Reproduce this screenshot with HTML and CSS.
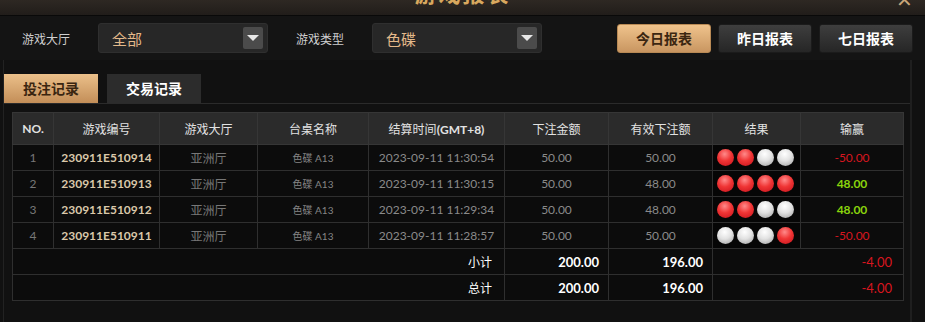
FILE: index.html
```html
<!DOCTYPE html>
<html lang="zh-CN">
<head>
<meta charset="UTF-8">
<meta name="viewport" content="width=device-width, initial-scale=1.0">
<title>游戏报表</title>
<link rel="stylesheet" href="styles.css">
</head>
<body>
  <div class="top-bar">
    <div class="title">游戏报表</div>
    <span class="close">✕</span>
  </div>

  <div class="filter-bar">
    <span class="label">游戏大厅</span>
    <div class="select">
      <span>全部</span>
      <span class="arrow"></span>
    </div>
    <span class="label">游戏类型</span>
    <div class="select">
      <span>色碟</span>
      <span class="arrow"></span>
    </div>
    <div class="btns">
      <button class="btn active">今日报表</button>
      <button class="btn">昨日报表</button>
      <button class="btn">七日报表</button>
    </div>
  </div>

  <div class="records">
    <div class="tabs">
      <div class="tab active">投注记录</div>
      <div class="tab">交易记录</div>
    </div>

    <table class="report">
      <colgroup>
        <col style="width:41px"><col style="width:106px"><col style="width:98px">
        <col style="width:111px"><col style="width:136px"><col style="width:104px">
        <col style="width:104px"><col style="width:88px"><col style="width:103px">
      </colgroup>
      <thead>
        <tr>
          <th class="en">NO.</th>
          <th>游戏编号</th>
          <th>游戏大厅</th>
          <th>台桌名称</th>
          <th>结算时间<span class="en">(GMT+8)</span></th>
          <th>下注金额</th>
          <th>有效下注额</th>
          <th>结果</th>
          <th>输赢</th>
        </tr>
      </thead>
      <tbody>
        <tr>
          <td class="no">1</td>
          <td class="id">230911E510914</td>
          <td class="hall">亚洲厅</td>
          <td class="desk">色碟 A13</td>
          <td class="num">2023-09-11 11:30:54</td>
          <td class="num">50.00</td>
          <td class="num">50.00</td>
          <td class="result"><i class="ball red"></i><i class="ball red"></i><i class="ball white"></i><i class="ball white"></i></td>
          <td class="lose">-50.00</td>
        </tr>
        <tr>
          <td class="no">2</td>
          <td class="id">230911E510913</td>
          <td class="hall">亚洲厅</td>
          <td class="desk">色碟 A13</td>
          <td class="num">2023-09-11 11:30:15</td>
          <td class="num">50.00</td>
          <td class="num">48.00</td>
          <td class="result"><i class="ball red"></i><i class="ball red"></i><i class="ball red"></i><i class="ball red"></i></td>
          <td class="win">48.00</td>
        </tr>
        <tr>
          <td class="no">3</td>
          <td class="id">230911E510912</td>
          <td class="hall">亚洲厅</td>
          <td class="desk">色碟 A13</td>
          <td class="num">2023-09-11 11:29:34</td>
          <td class="num">50.00</td>
          <td class="num">48.00</td>
          <td class="result"><i class="ball red"></i><i class="ball red"></i><i class="ball white"></i><i class="ball white"></i></td>
          <td class="win">48.00</td>
        </tr>
        <tr>
          <td class="no">4</td>
          <td class="id">230911E510911</td>
          <td class="hall">亚洲厅</td>
          <td class="desk">色碟 A13</td>
          <td class="num">2023-09-11 11:28:57</td>
          <td class="num">50.00</td>
          <td class="num">50.00</td>
          <td class="result"><i class="ball white"></i><i class="ball white"></i><i class="ball white"></i><i class="ball red"></i></td>
          <td class="lose">-50.00</td>
        </tr>
        <tr class="sum">
          <td colspan="5" class="sum-label">小计</td>
          <td class="sum-num">200.00</td>
          <td class="sum-num">196.00</td>
          <td colspan="2" class="sum-lose">-4.00</td>
        </tr>
        <tr class="sum">
          <td colspan="5" class="sum-label">总计</td>
          <td class="sum-num">200.00</td>
          <td class="sum-num">196.00</td>
          <td colspan="2" class="sum-lose">-4.00</td>
        </tr>
      </tbody>
    </table>
  </div>
</body>
</html>
```

FILE: styles.css
```css
body {
  margin: 0;
  width: 925px;
  height: 322px;
  overflow: hidden;
  background: #111111;
  color: #cccccc;
  font-family: Lato, "Noto Sans CJK SC", sans-serif;
}

/* title strip, mostly scrolled off the top */
.top-bar {
  position: relative;
  height: 15px;
  overflow: hidden;
  text-align: center;
  background: linear-gradient(#2e2823, #211d1a);
  border-bottom: 1px solid #090909;
}
.title {
  margin-top: -17px;
  font-size: 22px;
  line-height: 22px;
  font-weight: bold;
  letter-spacing: 2px;
  color: #d8a85e;
}
.close {
  position: absolute;
  right: 12px;
  top: -13px;
  font-size: 20px;
  color: #c9a77a;
}

.filter-bar {
  display: flex;
  align-items: center;
  height: 44px;
  padding: 0 12px 0 22px;
  background: #141414;
}
.label {
  width: 48px;
  margin-right: 28px;
  font-size: 12px;
  color: #cfcfcf;
}
.select {
  display: flex;
  align-items: center;
  justify-content: space-between;
  box-sizing: border-box;
  width: 170px;
  height: 30px;
  margin-right: 28px;
  padding: 0 4px 0 13px;
  background: #272727;
  border: 1px solid #2f2f2f;
  border-radius: 3px;
  color: #e4b98a;
  font-size: 15px;
}
.arrow {
  position: relative;
  width: 20px;
  height: 22px;
  background: #4b4b4b;
  border-radius: 2px;
}
.arrow::after {
  content: "";
  position: absolute;
  left: 4px;
  top: 8px;
  border-left: 6px solid transparent;
  border-right: 6px solid transparent;
  border-top: 6px solid #e8e8e8;
}
.btns {
  display: flex;
  gap: 7px;
  margin-left: auto;
}
.btn {
  width: 94px;
  height: 29px;
  padding: 0;
  border: 1px solid #1b1b1b;
  border-radius: 3px;
  background: linear-gradient(#3e3e3e, #262626);
  color: #ffffff;
  font-family: "Noto Sans CJK SC", sans-serif;
  font-size: 14px;
  font-weight: bold;
}
.btn.active {
  border-color: #b98a55;
  background: linear-gradient(#efc38c, #c99661);
  color: #3b2611;
}

.records {
  height: 262px;
  margin-left: 3px;
  width: 906px;
  border-left: 1px solid #222222;
  border-right: 2px solid #1f1f1f;
  background: #111111;
}
.tabs {
  display: flex;
  gap: 9px;
  padding-top: 14px;
  border-bottom: 1px solid #2b2b2b;
}
.tab {
  width: 94px;
  height: 29px;
  line-height: 29px;
  text-align: center;
  font-family: "Noto Sans CJK SC", sans-serif;
  font-size: 14px;
  font-weight: bold;
  background: #2c2c2c;
  color: #ffffff;
}
.tab.active {
  background: linear-gradient(#ebc08a, #c38e58);
  color: #3a2510;
}

.report {
  margin: 8px 0 0 8px;
  width: 891px;
  table-layout: fixed;
  border-collapse: collapse;
  border: 1px solid #333333;
}
.report th {
  height: 31px;
  padding: 0;
  background: #2b2b2b;
  border: 1px solid #363636;
  color: #e2e2e2;
  font-size: 12px;
  font-weight: normal;
}
.report th.en,
.report th .en {
  font-weight: bold;
}
.report td {
  height: 25px;
  padding: 0;
  background: #0c0c0c;
  border: 1px solid #2f2f2f;
  text-align: center;
  font-size: 12px;
  color: #8a8a8a;
}
.report td.no { color: #777777; }
.report td.id { font-weight: bold; color: #dac8aa; }
.report td.hall { color: #777777; }
.report td.desk { font-size: 10px; color: #858585; }
.report td.result {
  text-align: left;
  padding-left: 4px;
  background: #060606;
  font-size: 0;
}
.report td.lose { color: #d8161f; }
.report td.win { color: #8ad40c; font-weight: bold; }

.ball {
  display: inline-block;
  width: 17px;
  height: 17px;
  margin-right: 3px;
  border-radius: 50%;
  vertical-align: middle;
}
.ball.red {
  background: radial-gradient(circle at 45% 30%, #ff8a8a 0%, #f03535 45%, #c4101a 100%);
}
.ball.white {
  background: radial-gradient(circle at 45% 30%, #ffffff 0%, #e2e2e2 45%, #9c9c9c 100%);
}

.report .sum td { color: #ffffff; }
.report td.sum-label {
  text-align: right;
  padding-right: 12px;
}
.report td.sum-num {
  text-align: right;
  padding-right: 9px;
  font-size: 13px;
  font-weight: bold;
}
.report .sum td.sum-lose {
  text-align: right;
  padding-right: 11px;
  font-size: 13px;
  color: #d8161f;
}
```
